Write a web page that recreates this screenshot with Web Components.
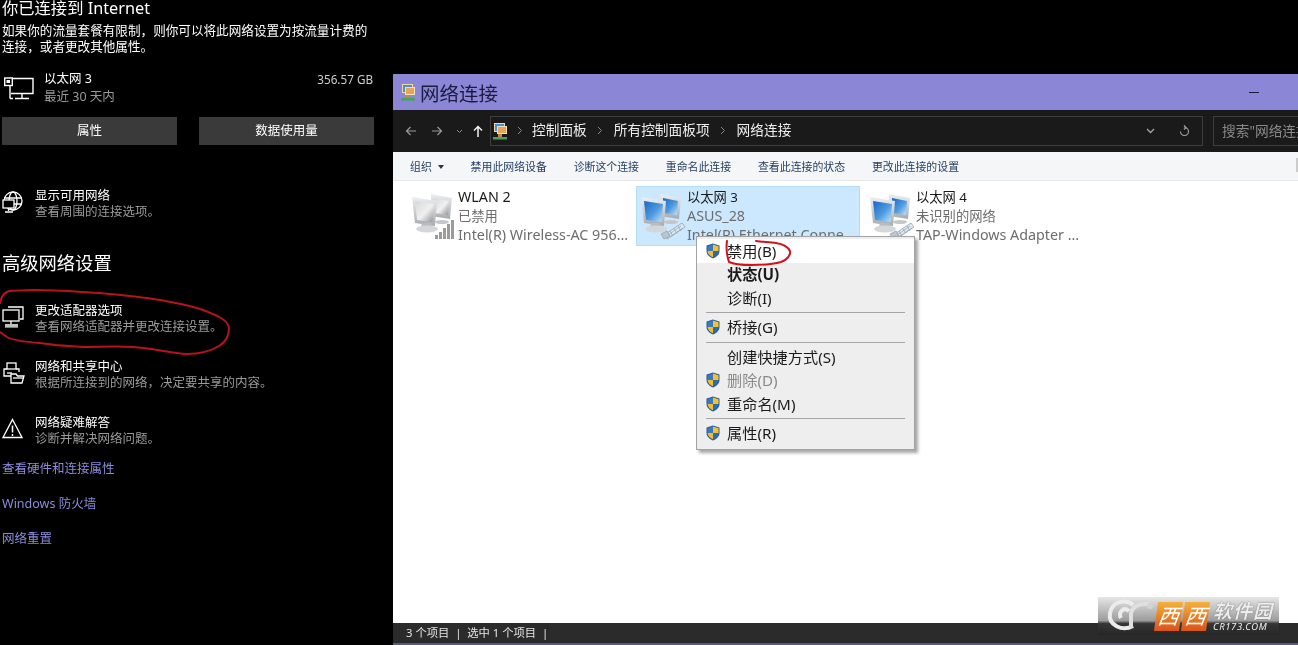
<!DOCTYPE html>
<html lang="zh-CN">
<head>
<meta charset="utf-8">
<title>网络连接</title>
<style>
html, body { margin: 0; padding: 0; background: #000; }
body { width: 1298px; height: 645px; overflow: hidden; font-family: "Noto Sans", "Noto Sans CJK SC", sans-serif; }
</style>
</head>
<body>
<network-page></network-page>
<script>
const FONT = '"Noto Sans", "Noto Sans CJK SC", sans-serif';

const ICONS = {
  ethernet: `<svg width="30" height="24" viewBox="0 0 30 24" fill="none" stroke="#fff" stroke-width="1.4">
    <path d="M5 1.5h24v15H7M18 17v4M11 21.500h14"/><path d="M6 9v12.500M6 21.500h3"/><rect x=".7" y="1" width="7.600" height="7.500" fill="#000"/><rect x="2.500" y="3" width="3.500" height="3" fill="#fff" stroke="none"/></svg>`,
  globe: `<svg width="22" height="23" viewBox="0 0 22 23" fill="none" stroke="#fff" stroke-width="1.300">
    <circle cx="11" cy="10" r="9"/><ellipse cx="11" cy="10" rx="4" ry="9"/><path d="M2 7h18M2 13h18"/><rect x="1" y="9" width="11" height="8" fill="#000"/><path d="M6.500 17v3M3 21h8"/></svg>`,
  adapter: `<svg width="22" height="22" viewBox="0 0 22 22" fill="none" stroke="#fff" stroke-width="1.300">
    <path d="M6 1h15v12h-3"/><rect x="1" y="4" width="16" height="11" fill="#000"/><path d="M9 15v3M3 19h13M3 20.800h13"/></svg>`,
  sharing: `<svg width="23" height="23" viewBox="0 0 23 23" fill="none" stroke="#fff" stroke-width="1.300">
    <rect x="5" y="1" width="9" height="6"/><path d="M5 7H2v7h8M14 7h3v3"/><path d="M5 11h5"/><path d="M9 21V12h5l1.500 2H22l-2 7z" fill="#000"/><path d="M11 16h11"/></svg>`,
  warn: `<svg width="21" height="21" viewBox="0 0 21 21" fill="none" stroke="#fff" stroke-width="1.300">
    <path d="M10.500 1.500 20 19.500H1z"/><path d="M10.500 7.500v7M10.500 16v2" stroke-width="1.500"/></svg>`,
  folderNet: `<svg width="16" height="17" viewBox="0 0 16 17"><rect x="2" y="0" width="11" height="9" fill="#e9d9a8"/><rect x="3" y="1" width="9" height="7" fill="#4b8fd0"/><rect x="5" y="3" width="10" height="8" fill="#efe2b9"/><rect x="6" y="4" width="8" height="6" fill="#e8a35a"/><rect x="6" y="11" width="4" height="3" fill="#b98b44"/><rect x="1" y="14" width="14" height="2.500" fill="#4aa35a"/></svg>`,
  shield: `<svg width="14" height="16" viewBox="0 0 14 16"><path d="M7 .5 13.500 2.500V8c0 3.500-3 6.200-6.500 7.500C3.500 14.200.5 11.500.5 8V2.500z" fill="#2a5f9f"/><path d="M7 1.500V8H1.500V3.200z" fill="#3b78bf"/><path d="M7 1.500 12.500 3.200V8H7z" fill="#f2c230"/><path d="M1.500 8H7v6.300C4 13 1.800 11 1.500 8z" fill="#efbf2b"/><path d="M7 8h5.500C12.200 11 10 13 7 14.300z" fill="#2f6bb1"/></svg>`,
};

function computerIcon(id, colors, extra) {
  return `<svg width="48" height="52" viewBox="0 0 48 52">
    <defs>
      <linearGradient id="${id}s" x1="0" y1="0" x2="1" y2="1"><stop offset="0" stop-color="${colors[0]}"/><stop offset=".55" stop-color="${colors[1]}"/><stop offset="1" stop-color="${colors[2]}"/></linearGradient>
      <linearGradient id="${id}b" x1="0" y1="0" x2="0" y2="1"><stop offset="0" stop-color="#eceff2"/><stop offset="1" stop-color="#a6abb0"/></linearGradient>
    </defs>
    <path d="M22 3 43 7 41 28 22 25z" fill="url(#${id}b)"/>
    <path d="M25 7 40 10 39 24 25 22z" fill="url(#${id}s)"/>
    <ellipse cx="33" cy="31" rx="7" ry="2" fill="#c4c7ca"/>
    <path d="M3 6 28 10 26 35 6 32z" fill="url(#${id}b)"/>
    <path d="M6 10 25 13 23.500 31 8 29z" fill="url(#${id}s)"/>
    <path d="M13 32h9l2 4H12z" fill="#b9bdc1"/>
    <ellipse cx="18" cy="38" rx="11" ry="3.500" fill="#d4d7da"/>
    ${extra}
  </svg>`;
}

const CABLE = `<g fill="#dfe8ef" stroke="#8fa3b3" stroke-width=".8"><path d="M26 44 44 32l3 4-18 12z"/><path d="M23 43l6-3 3 5-6 3z" fill="#bcc6ce"/></g>
  <path d="M30 44l13-9M32 46l13-9M32 40l3 5M36 37.500l3 5M40 35l3 5" stroke="#8fa3b3" stroke-width=".7" fill="none"/>`;
const BARS = `<g fill="#9b9b9b"><rect x="26" y="44" width="3" height="4"/><rect x="30" y="41" width="3" height="7"/><rect x="34" y="37" width="3" height="11"/><rect x="38" y="33" width="3" height="15"/><rect x="42" y="29" width="3" height="19"/></g>`;

class SettingLink extends HTMLElement {
  constructor() {
    super();
    this.attachShadow({ mode: 'open' });
    this.shadowRoot.innerHTML = `<style>
      :host { display: flex; height: 32px; align-items: flex-start; color: #fff; font-size: 12.500px; line-height: 16px; }
      .icon { width: 33px; flex: none; padding-top: 3px; display: block; }
      .sub { color: #9a9a9a; }
    </style>
    <div class="icon"><slot name="icon"></slot></div>
    <div><div><slot name="title"></slot></div><div class="sub"><slot name="sub"></slot></div></div>`;
  }
}

class SettingsPanel extends HTMLElement {
  constructor() {
    super();
    this.attachShadow({ mode: 'open' });
    const link = (icon, t, s, top) => `<setting-link style="margin-top:${top}px"><span slot="icon">${ICONS[icon]}</span><span slot="title">${t}</span><span slot="sub">${s}</span></setting-link>`;
    this.shadowRoot.innerHTML = `<style>
      :host { display: block; width: 393px; height: 645px; background: #000; color: #fff; box-sizing: border-box; padding-left: 2px; font-family: ${FONT}; }
      .title { font-size: 16.300px; line-height: 16px; }
      p { margin: 7px 0 0; font-size: 12.600px; line-height: 16px; width: 372px; }
      .eth { display: flex; margin-top: 16px; height: 34px; width: 371px; font-size: 12.500px; line-height: 16px; }
      .eth .icon { width: 42px; flex: none; padding: 6px 0 0 2px; box-sizing: border-box; }
      .eth .text { flex: 1; }
      .eth .sub { color: #9a9a9a; margin-top: 2px; }
      .eth .size { font-size: 11.700px; color: #cfcfcf; }
      .btns { display: flex; gap: 22px; margin-top: 12px; width: 372px; }
      .btn { width: 175px; height: 28px; background: #3a3a3a; text-align: center; font-size: 12.500px; line-height: 28px; }
      h2 { margin: 31px 0 0; font-weight: 400; font-size: 18.300px; line-height: 24px; }
      a { display: block; color: #8b8bdc; font-size: 12.500px; line-height: 16px; }
    </style>
    <div class="title">你已连接到 Internet</div>
    <p>如果你的流量套餐有限制，则你可以将此网络设置为按流量计费的连接，或者更改其他属性。</p>
    <div class="eth">
      <div class="icon">${ICONS.ethernet}</div>
      <div class="text"><div>以太网 3</div><div class="sub">最近 30 天内</div></div>
      <div class="size">356.57 GB</div>
    </div>
    <div class="btns"><div class="btn">属性</div><div class="btn">数据使用量</div></div>
    ${link('globe', '显示可用网络', '查看周围的连接选项。', 43)}
    <h2>高级网络设置</h2>
    ${link('adapter', '更改适配器选项', '查看网络适配器并更改连接设置。', 28)}
    ${link('sharing', '网络和共享中心', '根据所连接到的网络，决定要共享的内容。', 24)}
    ${link('warn', '网络疑难解答', '诊断并解决网络问题。', 24)}
    <a style="margin-top:14px">查看硬件和连接属性</a>
    <a style="margin-top:19px">Windows 防火墙</a>
    <a style="margin-top:19px">网络重置</a>`;
  }
}

class NetTile extends HTMLElement {
  constructor() {
    super();
    this.attachShadow({ mode: 'open' });
    this.shadowRoot.innerHTML = `<style>
      :host { display: flex; width: 224px; height: 60px; margin-right: 5px; box-sizing: border-box; font-size: 13.300px; line-height: 19px; color: #6d6d6d; }
      :host([selected]) { background: #cce8ff; outline: 1px solid #b5dcf8; outline-offset: -1px; }
      .icon { width: 51px; flex: none; padding: 5px 0 0 2px; box-sizing: border-box; }
      .text { padding-top: 2px; min-width: 0; white-space: nowrap; }
      .name { color: #1a1a1a; }
      ::slotted(.latin) { font-size: 14.300px; line-height: 15px; }
    </style>
    <div class="icon"><slot name="icon"></slot></div>
    <div class="text"><div class="name"><slot name="name"></slot></div><div><slot name="status"></slot></div><div><slot name="device"></slot></div></div>`;
  }
}

class MenuItem extends HTMLElement {
  constructor() {
    super();
    this.attachShadow({ mode: 'open' });
    const shield = this.hasAttribute('shield') ? ICONS.shield : '';
    this.shadowRoot.innerHTML = `<style>
      :host { display: flex; align-items: center; height: 23.500px; color: #1b1b1b; font-size: 15.200px; line-height: 20px; white-space: nowrap; }
      :host([hot]) { background: #fff; }
      :host([disabled]) { color: #8a8a8a; }
      :host([bold]) { font-weight: 700; }
      .gutter { width: 30px; flex: none; display: flex; justify-content: center; padding-left: 2px; box-sizing: border-box; }
      svg { display: block; }
    </style>
    <div class="gutter">${shield}</div><slot></slot>`;
  }
}

class ContextMenu extends HTMLElement {
  constructor() {
    super();
    this.attachShadow({ mode: 'open' });
    this.shadowRoot.innerHTML = `<style>
      :host { display: block; position: absolute; left: 303px; top: 163px; width: 219px; height: 214px; box-sizing: border-box; background: #eee; border: 1px solid #a3a3a3; padding: 2px 0 4px; box-shadow: 3px 3px 3px rgba(0,0,0,.35); font-family: ${FONT}; }
    </style><slot></slot>`;
  }
}

class WatermarkBadge extends HTMLElement {
  constructor() {
    super();
    this.attachShadow({ mode: 'open' });
    this.shadowRoot.innerHTML = `<style>
      :host { display: flex; align-items: center; position: absolute; left: 705px; top: 524px; width: 181px; height: 38px; box-sizing: border-box; padding-left: 8px; background: linear-gradient(#e6e6e6 0, #9c9c9c 62%, #363636 70%, #262626 100%); font-family: ${FONT}; }
      svg { flex: none; }
      .tile { width: 25px; height: 29px; margin-right: 2px; background: linear-gradient(#f4b13a, #d9531b); color: #fff; font-style: italic; font-size: 21px; line-height: 28px; text-align: center; transform: skewX(-8deg); }
      .brand { margin-left: 3px; color: #ececec; line-height: 1; text-shadow: 0 0 1px #444; }
      .cn { font-size: 19px; line-height: 20px; letter-spacing: 1px; font-weight: 700; font-style: italic; }
      .en { font-size: 9.500px; line-height: 11px; letter-spacing: .6px; font-style: italic; }
    </style>
    <svg width="50" height="36" viewBox="0 0 50 36" fill="none" stroke="#ececec" stroke-width="4"><path d="M27 7C22 2 7 1 4 15c-2 12 12 19 23 13"/><path d="M23 13c-6-5-11 2-8 7"/><path d="M25 30V15c1-6 8-9 13-9h6" stroke="#e0e0e0"/><circle cx="44" cy="8" r="3" fill="#d4d4d4" stroke="none"/></svg>
    <div class="tile">西</div><div class="tile">西</div>
    <div class="brand"><div class="cn">软件园</div><div class="en">CR173.COM</div></div>`;
  }
}

class ExplorerWindow extends HTMLElement {
  constructor() {
    super();
    this.attachShadow({ mode: 'open' });
    const chev = `<svg width="6" height="9" viewBox="0 0 6 9" fill="none" stroke="#8a8a8a" stroke-width="1"><path d="M1 1l3.500 3.500L1 8"/></svg>`;
    this.shadowRoot.innerHTML = `<style>
      :host { display: flex; flex-direction: column; position: relative; width: 905px; height: 572px; margin-top: 73px; background: #fff; font-family: ${FONT}; overflow: hidden; }
      .titlebar { height: 37px; flex: none; display: flex; align-items: center; background: #8b86d6; color: #1d1b3d; font-size: 19.500px; padding: 0 0 0 7px; box-sizing: border-box; border-top: 1px solid #000; }
      .titlebar .cap { margin-left: 4px; flex: 1; }
      .min { width: 10px; height: 1px; background: #1d1b3d; margin-right: 39px; }
      .address { height: 42px; flex: none; display: flex; align-items: center; background: #1a1a1a; color: #eee; font-size: 13.700px; box-sizing: border-box; }
      .nav { width: 97px; flex: none; display: flex; align-items: center; height: 100%; position: relative; }
      .nav svg { display: block; }
      .crumbs { width: 713px; height: 30px; box-sizing: border-box; border: 1px solid #3d3d3d; display: flex; align-items: center; padding-left: 1px; flex: none; }
      .crumbs span { white-space: nowrap; line-height: 26px; height: 26px; margin-bottom: 2px; }
      .crumbs .last { flex: 1; }
      .crumbs svg { flex: none; }
      .search { flex: none; margin-left: 10px; width: 90px; height: 30px; box-sizing: border-box; border: 1px solid #3d3d3d; border-right: 0; color: #8a8a8a; line-height: 28px; padding-left: 8px; white-space: nowrap; overflow: hidden; }
      .toolbar { height: 29px; flex: none; display: flex; align-items: center; gap: 26.800px; background: #f5f6f7; color: #1e3a5f; font-size: 10.900px; padding-left: 17px; box-sizing: border-box; border-bottom: 1px solid #e6e8ea; position: relative; }
      .toolbar .org::after { content: ""; display: inline-block; margin-left: 6px; vertical-align: 2px; border: 3px solid transparent; border-top: 4px solid #333; border-bottom: 0; }
      .toolbar .grip { position: absolute; right: 0; top: 6px; width: 2px; height: 14px; background: #ccc; }
      .content { flex: 1; display: flex; align-items: flex-start; padding: 5px 0 0 14px; background: #fff; }
      .status { height: 20px; flex: none; background: #2b2b2b; color: #e4e4e4; font-size: 11.300px; line-height: 20px; padding-left: 13px; white-space: pre; }
      .edge { height: 2px; flex: none; background: #5a5880; }
    </style>
    <div class="titlebar">${ICONS.folderNet}<span class="cap">网络连接</span><span class="min"></span></div>
    <div class="address">
      <div class="nav">
        <svg style="margin-left:12px" width="12" height="10" viewBox="0 0 12 10" fill="none" stroke="#9a9a9a" stroke-width="1.200"><path d="M11 5H1.500M5.500 1 1.500 5l4 4"/></svg>
        <svg style="margin-left:14px" width="12" height="10" viewBox="0 0 12 10" fill="none" stroke="#9a9a9a" stroke-width="1.200"><path d="M1 5h9.500M6.500 1l4 4-4 4"/></svg>
        <svg style="margin-left:13px" width="7" height="5" viewBox="0 0 7 5" fill="none" stroke="#8a8a8a" stroke-width="1"><path d="M1 1l2.500 2.500L6 1"/></svg>
        <svg style="margin-left:10px" width="10" height="12" viewBox="0 0 10 12" fill="none" stroke="#f2f2f2" stroke-width="1.500"><path d="M5 12V1.500M1 5.500l4-4 4 4"/></svg>
      </div>
      <div class="crumbs">
        ${ICONS.folderNet}
        <span style="margin-left:9px;display:flex;align-items:center">${chev}</span><span style="margin-left:9px">控制面板</span>
        <span style="margin-left:10px;display:flex;align-items:center">${chev}</span><span style="margin-left:11px">所有控制面板项</span>
        <span style="margin-left:10px;display:flex;align-items:center">${chev}</span><span class="last" style="margin-left:11px">网络连接</span>
        <svg width="9" height="6" viewBox="0 0 9 6" fill="none" stroke="#a5a5a5" stroke-width="1.300"><path d="M1 1l3.500 3.500L8 1"/></svg>
        <svg style="margin:0 12px 0 24px" width="11" height="12" viewBox="0 0 11 12" fill="none" stroke="#a5a5a5" stroke-width="1.100"><path d="M5.500 2.500a4 4 0 1 1-4 4M5 .5l2 2-2 2"/></svg>
      </div>
      <div class="search">搜索"网络连接"</div>
    </div>
    <div class="toolbar">
      <span class="org">组织</span><span>禁用此网络设备</span><span>诊断这个连接</span><span>重命名此连接</span><span>查看此连接的状态</span><span>更改此连接的设置</span>
      <span class="grip"></span>
    </div>
    <div class="content"><slot name="tiles"></slot></div>
    <div class="status">3 个项目  |  选中 1 个项目  |</div>
    <div class="edge"></div>
    <slot></slot>`;
  }
}

class InkMarks extends HTMLElement {
  constructor() {
    super();
    this.attachShadow({ mode: 'open' });
    this.shadowRoot.innerHTML = `<style>
      :host { display: block; position: absolute; inset: 0; pointer-events: none; }
      svg { display: block; }
    </style>
    <svg width="1298" height="645" viewBox="0 0 1298 645" fill="none" stroke="#b8121c" stroke-width="2" stroke-linecap="round">
      <path d="M0 303C1 297 4 293 8 291.500 14 290 22 291 33 290 58 290 80 292 100 293 122 295 142 297 160 300 176 303 190 305 203 310 216 315 226 319 228.500 326 230 333 227 341 219 346 209 352 198 354 187 354 170 353 152 348 133 347 115 346 100 347 83 347 66 346 52 345 40 343 26 342 14 341 7 337L0 332"/>
      <path d="M727 241C726 248 727 256 729 262 735 265 744 265 752 265 762 265 774 264 781 262 787 260 791 255 790 251 788 247 782 244 776 243 770 242 762 242 756 241" stroke="#d0141e"/>
    </svg>`;
  }
}

class NetworkPage extends HTMLElement {
  constructor() {
    super();
    this.attachShadow({ mode: 'open' });
    const gray = ['#d8d8d8', '#f0f0f0', '#8f8f8f'];
    const blue = ['#1667c4', '#4f9be0', '#c4e6fa'];
    const rule = 'height:1px;border:0;background:#a5a5a5;margin:2.500px 9px';
    this.shadowRoot.innerHTML = `<style>
      :host { display: flex; position: relative; width: 1298px; height: 645px; overflow: hidden; background: #000; filter: blur(.3px); }
    </style>
    <settings-panel></settings-panel>
    <explorer-window>
      <net-tile slot="tiles"><span slot="icon">${computerIcon('a', gray, BARS)}</span><span slot="name" class="latin">WLAN 2</span><span slot="status">已禁用</span><span slot="device" class="latin">Intel(R) Wireless-AC 956...</span></net-tile>
      <net-tile slot="tiles" selected><span slot="icon">${computerIcon('b', blue, CABLE)}</span><span slot="name">以太网 3</span><span slot="status" class="latin">ASUS_28</span><span slot="device" class="latin">Intel(R) Ethernet Conne...</span></net-tile>
      <net-tile slot="tiles"><span slot="icon">${computerIcon('c', blue, CABLE)}</span><span slot="name">以太网 4</span><span slot="status">未识别的网络</span><span slot="device" class="latin">TAP-Windows Adapter ...</span></net-tile>
      <context-menu>
        <menu-item shield hot>禁用(B)</menu-item>
        <menu-item bold>状态(U)</menu-item>
        <menu-item>诊断(I)</menu-item>
        <hr style="${rule}">
        <menu-item shield>桥接(G)</menu-item>
        <hr style="${rule}">
        <menu-item>创建快捷方式(S)</menu-item>
        <menu-item shield disabled>删除(D)</menu-item>
        <menu-item shield>重命名(M)</menu-item>
        <hr style="${rule}">
        <menu-item shield>属性(R)</menu-item>
      </context-menu>
      <watermark-badge></watermark-badge>
    </explorer-window>
    <ink-marks></ink-marks>`;
  }
}

customElements.define('setting-link', SettingLink);
customElements.define('settings-panel', SettingsPanel);
customElements.define('net-tile', NetTile);
customElements.define('menu-item', MenuItem);
customElements.define('context-menu', ContextMenu);
customElements.define('watermark-badge', WatermarkBadge);
customElements.define('explorer-window', ExplorerWindow);
customElements.define('ink-marks', InkMarks);
customElements.define('network-page', NetworkPage);
</script>
</body>
</html>
